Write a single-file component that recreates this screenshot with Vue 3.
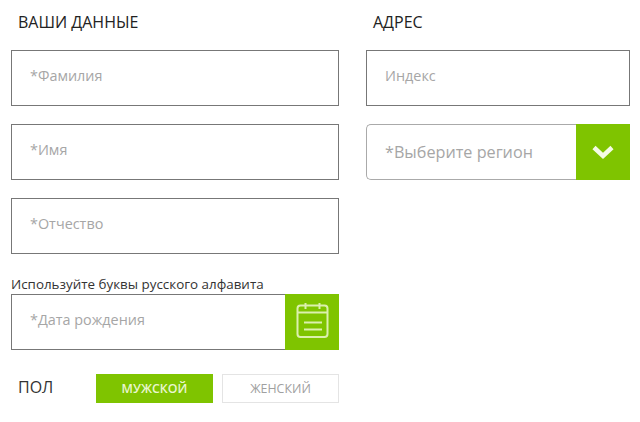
<script setup>
import { ref } from 'vue';

const gender = ref('male');
</script>

<template>
    <div class="page">
        <section class="col col--left">
            <h2 class="title">ВАШИ ДАННЫЕ</h2>
            <input class="field" type="text" placeholder="*Фамилия" />
            <input class="field" type="text" placeholder="*Имя" />
            <input class="field" type="text" placeholder="*Отчество" />
            <p class="hint">Используйте буквы русского алфавита</p>
            <div class="date">
                <input class="field field--date" type="text" placeholder="*Дата рождения" />
                <button class="date-btn" type="button" aria-label="Календарь">
                    <svg width="34" height="38" viewBox="0 0 34 38" fill="none" stroke="#dcf0ae" stroke-width="2">
                        <rect x="2.500" y="2.500" width="30" height="31.500" rx="3" />
                        <path d="M10.500 0v6M24.500 0v6M2.500 9.500h30M9 19.500h18M9 26.500h18" />
                    </svg>
                </button>
            </div>
            <div class="gender">
                <span class="gender-label">ПОЛ</span>
                <button
                    class="gender-btn"
                    :class="{ 'gender-btn--active': gender === 'male' }"
                    type="button"
                    @click="gender = 'male'"
                >МУЖСКОЙ</button>
                <button
                    class="gender-btn"
                    :class="{ 'gender-btn--active': gender === 'female' }"
                    type="button"
                    @click="gender = 'female'"
                >ЖЕНСКИЙ</button>
            </div>
        </section>
        <section class="col col--right">
            <h2 class="title">АДРЕС</h2>
            <input class="field" type="text" placeholder="Индекс" />
            <div class="region">
                <span class="region-text">*Выберите регион</span>
                <span class="region-btn">
                    <svg width="24" height="16" viewBox="0 0 24 16" fill="none" stroke="#f4fbe6" stroke-width="4.500">
                        <path d="M3 3.500l9 8.500 9-8.500" />
                    </svg>
                </span>
            </div>
        </section>
    </div>
</template>

<style scoped>
.page {
    display: flex;
    gap: 27px;
    padding: 0 10px 0 11px;
    width: 640px;
    height: 422px;
    box-sizing: border-box;
    background: #fff;
    font-family: "Open Sans", sans-serif;
    overflow: hidden;
}

.col {
    display: flex;
    flex-direction: column;
}

.col--left {
    width: 328px;
}

.col--right {
    width: 264px;
}

.title {
    margin: 0;
    padding: 11px 0 0 7px;
    height: 50px;
    box-sizing: border-box;
    font-size: 16px;
    line-height: 22px;
    font-weight: 400;
    color: #222;
}

.field {
    display: block;
    width: 100%;
    height: 56px;
    margin-bottom: 18px;
    padding: 0 18px 6px;
    box-sizing: border-box;
    border: 1px solid #777;
    border-radius: 0;
    outline: none;
    background: #fff;
    font-family: inherit;
    font-size: 14.4px;
    color: #333;
}

.field::placeholder {
    color: #a6a6a6;
    opacity: 1;
}

.hint {
    margin: 3px 0 0;
    height: 19px;
    font-size: 13.4px;
    line-height: 19px;
    color: #333;
}

.date {
    display: flex;
    height: 56px;
}

.field--date {
    flex: 1;
    width: auto;
    margin: 0;
    border-right: 0;
}

.date-btn {
    display: flex;
    align-items: center;
    justify-content: center;
    width: 54px;
    padding: 0;
    border: 0;
    background: #7fc400;
}

.gender {
    display: flex;
    align-items: center;
    margin-top: 24px;
    height: 29px;
}

.gender-label {
    width: 85px;
    padding: 0 0 4px 7px;
    box-sizing: border-box;
    font-size: 16px;
    color: #333;
}

.gender-btn {
    width: 117px;
    height: 29px;
    padding: 0 0 1px;
    box-sizing: border-box;
    border: 1px solid #e4e4e4;
    background: #fff;
    font-family: inherit;
    font-size: 12.400px;
    font-weight: 400;
    color: #a0a0a0;
}

.gender-btn + .gender-btn {
    margin-left: 9px;
}

.gender-btn--active {
    border-color: #7fc400;
    background: #7fc400;
    font-weight: 600;
    color: #e9f6cf;
}

.region {
    display: flex;
    height: 56px;
    box-sizing: border-box;
    border: 1px solid #aaa;
    border-right: 0;
    border-radius: 5px 0 0 5px;
    background: #fff;
}

.region-text {
    flex: 1;
    padding: 17px 0 0 18px;
    font-size: 16.200px;
    line-height: 20px;
    color: #a6a6a6;
}

.region-btn {
    display: flex;
    align-items: center;
    justify-content: center;
    width: 54px;
    margin: -1px 0;
    background: #7fc400;
}
</style>
